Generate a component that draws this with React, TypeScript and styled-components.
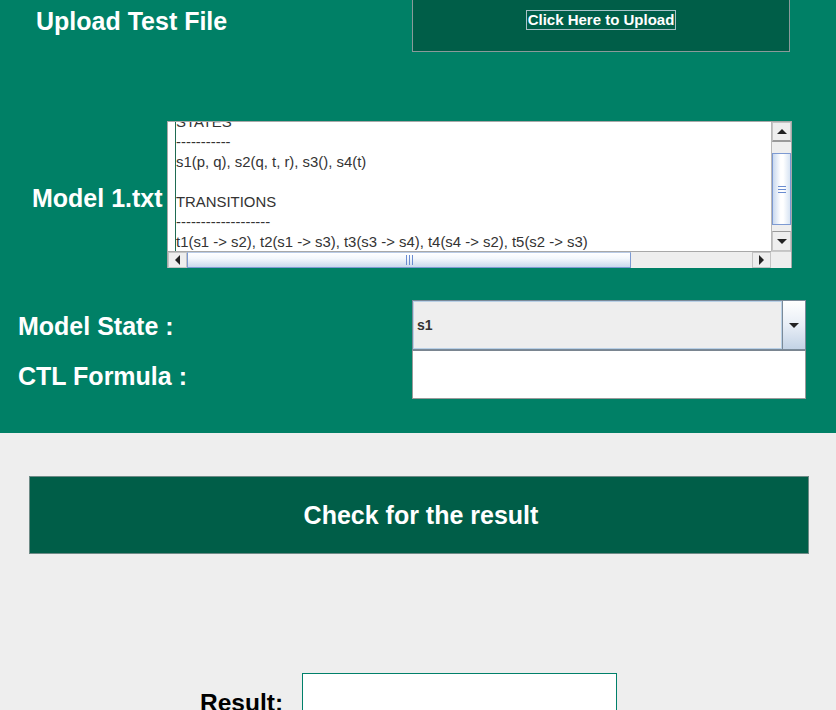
import React from "react";
import styled, { createGlobalStyle } from "styled-components";

const GlobalStyle = createGlobalStyle`
  html, body { margin: 0; padding: 0; background: #eeeeee; }
  body { font-family: "Liberation Sans", Arial, sans-serif; }
  * { box-sizing: border-box; }
`;

const Page = styled.div`
  width: 836px;
  height: 710px;
  overflow: hidden;
  background: #eeeeee;
`;

const TopPanel = styled.section`
  background: #008066;
  height: 433px;
  display: flex;
  flex-direction: column;
`;

const Label = styled.div<{ $pad: number; $top?: number }>`
  padding-left: ${(p) => p.$pad}px;
  padding-top: ${(p) => p.$top ?? 0}px;
  font-weight: bold;
  font-size: 25px;
  line-height: 28px;
  color: #ffffff;
  white-space: nowrap;
`;

const UploadRow = styled.div`
  display: grid;
  grid-template-columns: 412px 378px;
  height: 51px;
`;

const UploadButton = styled.button`
  all: unset;
  box-sizing: border-box;
  height: 52px;
  background: #005e48;
  border: 1px solid #8a9a9a;
  border-top: none;
  display: flex;
  justify-content: center;
  align-items: flex-start;
  padding-top: 10px;
`;

const UploadInner = styled.span`
  border: 1px solid #a9c2c8;
  padding: 0 1px;
  font-weight: bold;
  font-size: 15px;
  line-height: 18px;
  color: #ffffff;
`;

const ModelRow = styled.div`
  display: grid;
  grid-template-columns: 167px 625px;
  margin-top: 70px;
  align-items: center;
`;

const ScrollPane = styled.div`
  width: 625px;
  height: 147px;
  border-left: 1px solid #a8a8a8;
  border-top: 1px solid #a8a8a8;
  border-right: 1px solid #a8a8a8;
  display: grid;
  grid-template-columns: 603px 20px;
  grid-template-rows: 1fr 17px;
  background: #eeeeee;
`;

const Viewport = styled.div`
  background: #ffffff;
  overflow: hidden;
  padding-left: 7px;
`;

const TextBlock = styled.pre`
  margin: -10px 0 0 0;
  border-left: 1px solid #1f6b52;
  padding-left: 0;
  font-family: "Liberation Sans", Arial, sans-serif;
  font-size: 14.9px;
  line-height: 20px;
  color: #333333;
  white-space: pre;
  min-height: 200px;
`;

const VScroll = styled.div`
  display: grid;
  grid-template-rows: 20px 11px 72px 1fr 20px;
  background: #eeeeee;
  border-left: 1px solid #b8b8b8;
`;

const HScroll = styled.div`
  display: grid;
  grid-template-columns: 19px 444px 1fr 19px;
  background: #eeeeee;
  border-top: 1px solid #a8a8a8;
`;

const ArrowBtn = styled.div<{ $dir: "up" | "down" | "left" | "right" }>`
  display: flex;
  align-items: center;
  justify-content: center;
  background: #eeeeee;
  border: 1px solid #c4c4c4;
  ${(p) =>
    p.$dir === "up"
      ? "border-bottom: 2px solid #9a9a9a;"
      : p.$dir === "down"
      ? "border-top: 1px solid #9a9a9a;"
      : ""}
`;

const Track = styled.div`
  background: #eeeeee;
`;

const VThumb = styled.div`
  border: 1px solid #7d9ad2;
  background: linear-gradient(90deg, #c9d9ef 0%, #ffffff 45%, #ffffff 60%, #d8e4f3 100%);
  display: flex;
  align-items: center;
  justify-content: center;
`;

const HThumb = styled.div`
  border: 1px solid #7d9ad2;
  border-top-color: #b9cbe6;
  background: linear-gradient(180deg, #ffffff 0%, #f3f7fc 40%, #c9d8ec 100%);
  display: flex;
  align-items: center;
  justify-content: center;
`;

const Corner = styled.div`
  background: #eeeeee;
  border-top: 1px solid #c8c8c8;
`;

const Tri = ({ dir }: { dir: "up" | "down" | "left" | "right" }) => {
  const pts =
    dir === "up"
      ? "0,5 5,0 10,5"
      : dir === "down"
      ? "0,0 10,0 5,5"
      : dir === "left"
      ? "5,0 5,10 0,5"
      : "0,0 5,5 0,10";
  const w = dir === "up" || dir === "down" ? 10 : 5;
  const h = dir === "up" || dir === "down" ? 5 : 10;
  return (
    <svg width={w} height={h} viewBox={`0 0 ${w} ${h}`}>
      <polygon points={pts} fill="#222" />
    </svg>
  );
};

const Grip = ({ vertical }: { vertical: boolean }) =>
  vertical ? (
    <svg width="8" height="7" viewBox="0 0 8 7">
      <rect x="0" y="0" width="8" height="1" fill="#6a8cd0" />
      <rect x="0" y="3" width="8" height="1" fill="#6a8cd0" />
      <rect x="0" y="6" width="8" height="1" fill="#6a8cd0" />
    </svg>
  ) : (
    <svg width="7" height="10" viewBox="0 0 7 10">
      <rect x="0" y="0" width="1" height="10" fill="#6a8cd0" />
      <rect x="3" y="0" width="1" height="10" fill="#6a8cd0" />
      <rect x="6" y="0" width="1" height="10" fill="#6a8cd0" />
    </svg>
  );

const StateGrid = styled.div`
  display: grid;
  grid-template-columns: 412px 394px;
  grid-template-rows: 50px 49px;
  margin-top: 32px;
`;

const RowLabel = styled(Label)`
  align-self: center;
  transform: translateY(1px);
`;

const Combo = styled.div`
  border: 1px solid #7a8a99;
  display: flex;
  background: #eeeeee;
`;

const ComboValue = styled.div`
  flex: 1;
  border: 1px solid #b9d0e6;
  display: flex;
  align-items: center;
  padding-left: 3px;
  font-weight: bold;
  font-size: 14px;
  color: #333333;
`;

const ComboArrow = styled.div`
  width: 23px;
  border-left: 1px solid #7a8a99;
  background: linear-gradient(180deg, #ffffff 0%, #e8eef6 50%, #c3d3e6 100%);
  display: flex;
  align-items: center;
  justify-content: center;
`;

const Field = styled.div`
  background: #ffffff;
  border: 1px solid #9a9a9a;
  border-top: 1px solid #7a8590;
`;

const BottomPanel = styled.section`
  display: flex;
  flex-direction: column;
  padding-top: 43px;
`;

const CheckButton = styled.button`
  all: unset;
  box-sizing: border-box;
  margin-left: 29px;
  width: 780px;
  height: 78px;
  background: #005e48;
  border: 1px solid #6d8a86;
  display: flex;
  align-items: center;
  justify-content: center;
  font-weight: bold;
  font-size: 25px;
  color: #ffffff;
  padding-top: 1px;
  padding-left: 4px;
`;

const ResultRow = styled.div`
  display: flex;
  margin-top: 119px;
  padding-left: 200px;
  gap: 19px;
`;

const ResultLabel = styled.div`
  padding-top: 16px;
  font-weight: bold;
  font-size: 24.5px;
  line-height: 28px;
  color: #000000;
`;

const ResultField = styled.div`
  width: 315px;
  height: 50px;
  background: #ffffff;
  border: 1px solid #00806a;
`;

const modelText = `STATES
-----------
s1(p, q), s2(q, t, r), s3(), s4(t)

TRANSITIONS
-------------------
t1(s1 -> s2), t2(s1 -> s3), t3(s3 -> s4), t4(s4 -> s2), t5(s2 -> s3)
`;

export default function App() {
  return (
    <Page>
      <GlobalStyle />
      <TopPanel>
        <UploadRow>
          <Label $pad={36} $top={7}>Upload Test File</Label>
          <UploadButton>
            <UploadInner>Click Here to Upload</UploadInner>
          </UploadButton>
        </UploadRow>

        <ModelRow>
          <Label $pad={32} $top={6}>Model 1.txt</Label>
          <ScrollPane>
            <Viewport>
              <TextBlock>{modelText}</TextBlock>
            </Viewport>
            <VScroll>
              <ArrowBtn $dir="up"><Tri dir="up" /></ArrowBtn>
              <Track />
              <VThumb><Grip vertical /></VThumb>
              <Track />
              <ArrowBtn $dir="down"><Tri dir="down" /></ArrowBtn>
            </VScroll>
            <HScroll>
              <ArrowBtn $dir="left"><Tri dir="left" /></ArrowBtn>
              <HThumb><Grip vertical={false} /></HThumb>
              <Track />
              <ArrowBtn $dir="right"><Tri dir="right" /></ArrowBtn>
            </HScroll>
            <Corner />
          </ScrollPane>
        </ModelRow>

        <StateGrid>
          <RowLabel $pad={18}>Model State :</RowLabel>
          <Combo>
            <ComboValue>s1</ComboValue>
            <ComboArrow><Tri dir="down" /></ComboArrow>
          </Combo>
          <RowLabel $pad={18}>CTL Formula :</RowLabel>
          <Field />
        </StateGrid>
      </TopPanel>

      <BottomPanel>
        <CheckButton>Check for the result</CheckButton>
        <ResultRow>
          <ResultLabel>Result:</ResultLabel>
          <ResultField />
        </ResultRow>
      </BottomPanel>
    </Page>
  );
}
